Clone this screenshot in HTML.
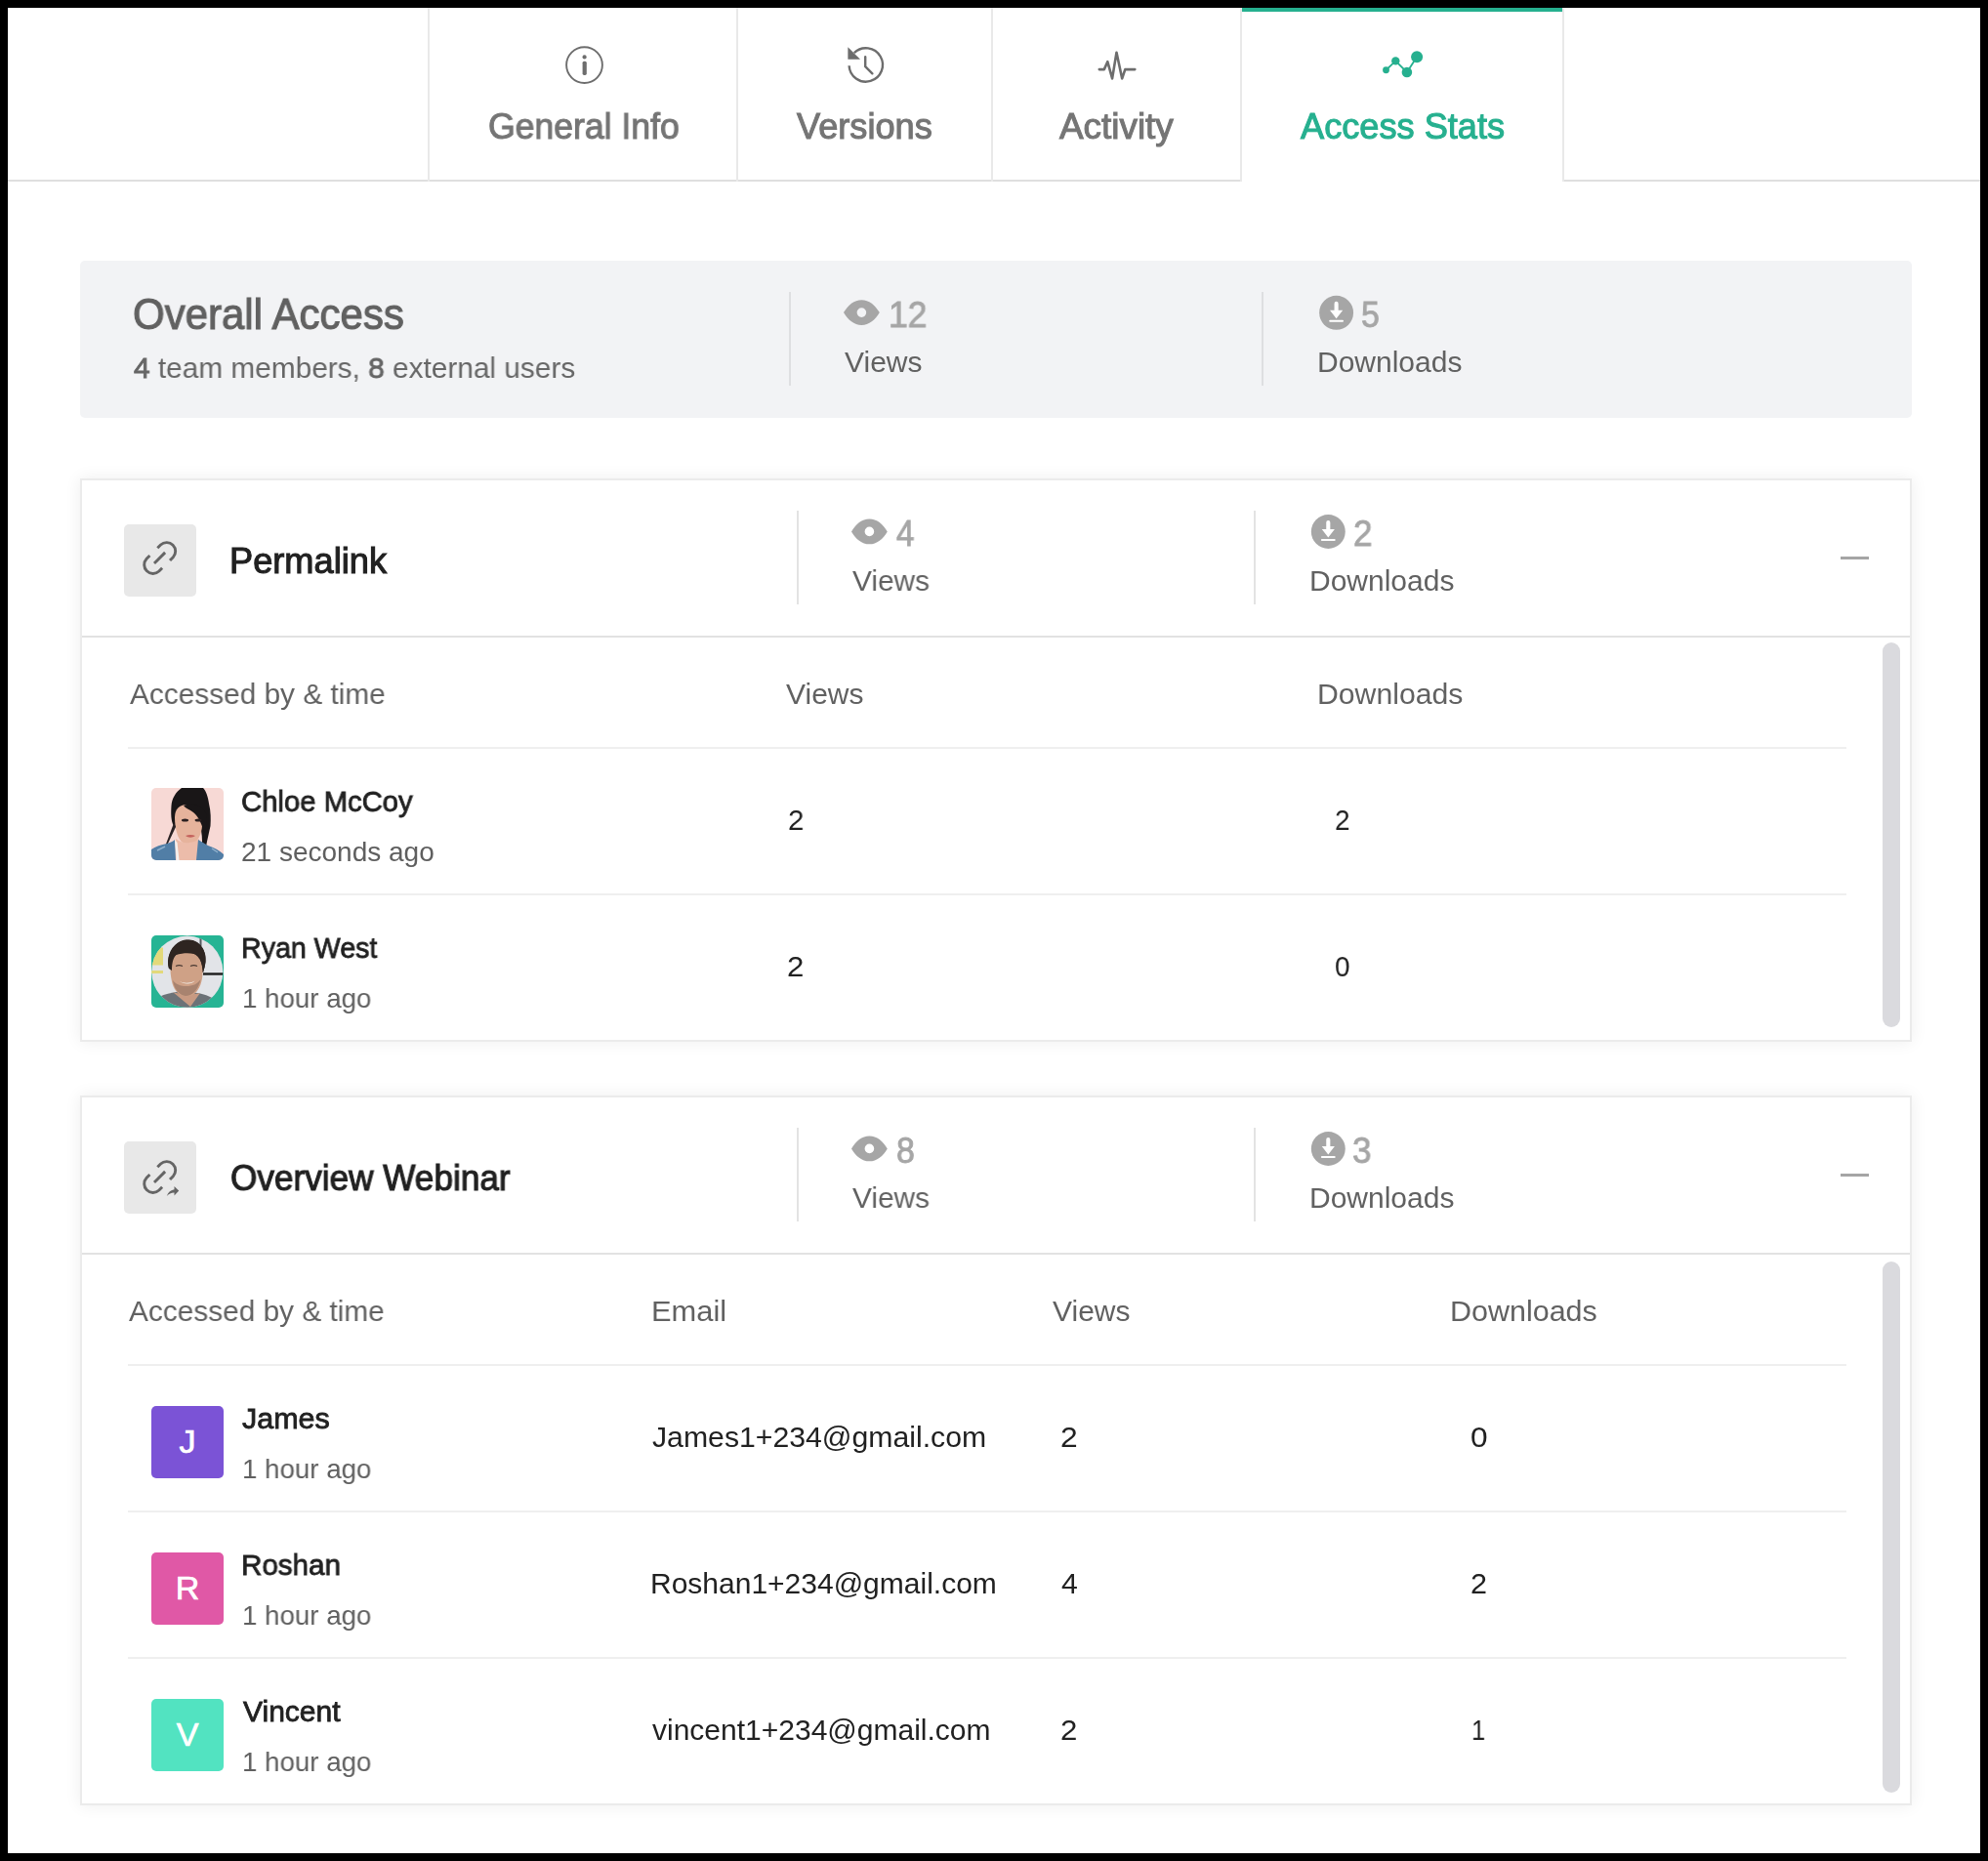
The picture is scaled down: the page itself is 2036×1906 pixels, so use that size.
<!DOCTYPE html>
<html><head><meta charset="utf-8"><title>Access Stats</title>
<style>

*{margin:0;padding:0;box-sizing:border-box}
html,body{width:2036px;height:1906px;overflow:hidden;background:#000}
body{position:relative;font-family:'Liberation Sans', sans-serif}
.t{position:absolute;white-space:nowrap;line-height:1;transform-origin:0 0;will-change:transform}
.t b.m{font-weight:400;-webkit-text-stroke:0.9px #666}

.a{position:absolute}
#page{position:absolute;left:8px;top:8px;width:2020px;height:1890px;background:#fff;overflow:hidden}
.vl{position:absolute;width:2px;background:#e9e9e9}
.hl{position:absolute;height:2px;background:#dfdfdf}
.card{position:absolute;left:82px;width:1876px;background:#fff;border:2px solid #ebebeb;box-shadow:0 0 16px rgba(0,0,0,0.07)}
.box{position:absolute;left:127px;width:74px;height:74px;border-radius:5px;background:#e8e8e8}
.minus{position:absolute;left:1885px;width:29px;height:3px;background:#a5a5a5}
.sep{position:absolute;left:131px;width:1760px;height:2px;background:#efefef}
.thumb{position:absolute;left:1928px;width:18px;border-radius:9px;background:#dadade}
.hdiv{position:absolute;width:2px;background:#e3e3e3}
.av{position:absolute;left:155px;width:74px;height:74px;border-radius:5px;overflow:hidden}
.lt{position:absolute;left:0;top:-1px;width:74px;height:74px;line-height:74px;text-align:center;color:#fff;font-size:34px;-webkit-text-stroke:0.7px #fff}
svg{position:absolute;left:0;top:0}
</style></head>
<body>
<div id="page"></div>

<!-- tabs -->
<div class="hl" style="left:8px;top:184px;width:1262px"></div>
<div class="hl" style="left:1602px;top:184px;width:426px"></div>
<div class="vl" style="left:438px;top:8px;height:178px"></div>
<div class="vl" style="left:754px;top:8px;height:178px"></div>
<div class="vl" style="left:1015px;top:8px;height:178px"></div>
<div class="vl" style="left:1270px;top:8px;height:178px"></div>
<div class="vl" style="left:1600px;top:8px;height:178px"></div>
<div class="a" style="left:1272px;top:8px;width:328px;height:4px;background:#26b08f"></div>

<!-- overall panel -->
<div class="a" style="left:82px;top:267px;width:1876px;height:161px;border-radius:5px;background:#f2f3f5"></div>
<div class="hdiv" style="left:808px;top:299px;height:96px;background:#dedfe1"></div>
<div class="hdiv" style="left:1292px;top:299px;height:96px;background:#dedfe1"></div>

<!-- card 1 -->
<div class="card" style="top:490px;height:577px"></div>
<div class="a" style="left:84px;top:651px;width:1872px;height:2px;background:#e2e2e2"></div>
<div class="box" style="top:537px"></div>
<div class="hdiv" style="left:816px;top:523px;height:96px"></div>
<div class="hdiv" style="left:1284px;top:523px;height:96px"></div>
<div class="minus" style="top:570px"></div>
<div class="sep" style="top:765px"></div>
<div class="sep" style="top:915px"></div>
<div class="thumb" style="top:658px;height:394px"></div>

<!-- card 2 -->
<div class="card" style="top:1122px;height:727px"></div>
<div class="a" style="left:84px;top:1283px;width:1872px;height:2px;background:#e2e2e2"></div>
<div class="box" style="top:1169px"></div>
<div class="hdiv" style="left:816px;top:1155px;height:96px"></div>
<div class="hdiv" style="left:1284px;top:1155px;height:96px"></div>
<div class="minus" style="top:1202px"></div>
<div class="sep" style="top:1397px"></div>
<div class="sep" style="top:1547px"></div>
<div class="sep" style="top:1697px"></div>
<div class="thumb" style="top:1292px;height:544px"></div>

<!-- letter avatars -->
<div class="av" style="top:1440px;background:#7b53d6"><div class="lt">J</div></div>
<div class="av" style="top:1590px;background:#e058a6"><div class="lt">R</div></div>
<div class="av" style="top:1740px;background:#52e3c1"><div class="lt">V</div></div>

<svg width="2036" height="1906" viewBox="0 0 2036 1906">
  <defs>
    <path id="eye" fill-rule="evenodd" d="M-18.4 0C-14 -7.6 -7.6 -12.9 0 -12.9C7.6 -12.9 14 -7.6 18.4 0C14 7.6 7.6 12.9 0 12.9C-7.6 12.9 -14 7.6 -18.4 0ZM-4.8 0A4.8 4.8 0 1 0 4.8 0A4.8 4.8 0 1 0 -4.8 0Z"/>
    <g id="dl">
      <circle r="17.45" fill="#a6a6a6"/>
      <path fill="#fff" d="M-2.05 -2.5L-2.05 -9.4A2.05 2.05 0 0 1 2.05 -9.4L2.05 -2.5L6.6 -2.5L0 5.9L-6.6 -2.5Z"/>
      <rect x="-7.4" y="7.4" width="14.8" height="2.1" rx="1" fill="#fff"/>
    </g>
    <g id="chain" fill="none" stroke="#656565" stroke-width="2.9">
      <path d="M34.29 24.29L37.54 21.04A9 9 0 0 1 50.26 33.76L47.01 37.01"/>
      <path d="M26.39 32.09L23.14 35.34A9 9 0 0 0 35.86 48.06L39.11 44.81"/>
      <path d="M31 40L42.1 28.9"/>
    </g>
  </defs>

  <!-- tab icons -->
  <g fill="none" stroke="#6d6d6d" stroke-width="1.9">
    <circle cx="598.5" cy="66.6" r="18.4"/>
  </g>
  <circle cx="598.6" cy="58.4" r="2.1" fill="#6d6d6d"/>
  <rect x="596.6" y="62.7" width="4.2" height="14.2" rx="1.6" fill="#6d6d6d"/>

  <g fill="none" stroke="#6d6d6d" stroke-width="2.4" stroke-linecap="round" stroke-linejoin="round">
    <path d="M869.6 67.2A17.2 17.2 0 1 0 874.8 54.1" stroke-linecap="butt"/>
    <path d="M886.2 58.3L886.2 68.2L893.4 75.3"/>
  </g>
  <path d="M868.4 48.2L868.4 60.8L881 60.8Z" fill="#6d6d6d"/>

  <polyline points="1125.8,71.1 1130.8,71.1 1134.3,63.2 1139.1,80.4 1143.5,53.8 1149.2,80.4 1152.3,71.1 1162.3,71.1" fill="none" stroke="#6d6d6d" stroke-width="2.6" stroke-linecap="round" stroke-linejoin="round"/>

  <g fill="#26b08f">
    <polyline points="1419.5,71.75 1429.3,62.4 1440.9,74 1451.1,58.2" fill="none" stroke="#26b08f" stroke-width="1.8"/>
    <circle cx="1419.5" cy="71.75" r="3.4"/>
    <circle cx="1429.3" cy="62.4" r="4.2"/>
    <circle cx="1440.9" cy="74" r="5.3"/>
    <circle cx="1451.1" cy="58.2" r="6"/>
  </g>

  <!-- overall stats icons -->
  <use href="#eye" x="882.4" y="320.1" fill="#a6a6a6"/>
  <use href="#dl" x="1368.6" y="320.3"/>

  <!-- card 1 -->
  <use href="#eye" x="890.4" y="544.4" fill="#a6a6a6"/>
  <use href="#dl" x="1360.3" y="544.5"/>
  <use href="#chain" x="127" y="537"/>

  <!-- card 2 -->
  <use href="#eye" x="890.4" y="1176.4" fill="#a6a6a6"/>
  <use href="#dl" x="1360.3" y="1176.5"/>
  <use href="#chain" x="127" y="1171"/>
  <path transform="translate(127 1169)" fill="#656565" d="M43.8 56C45.2 51.8 48 49.6 51.5 49.2L51.5 46L56.2 50.6L51.5 55.4L51.5 52.4C48.4 52.3 46 53.6 43.8 56Z"/>

  <!-- Chloe avatar -->
  <g transform="translate(155 807)">
    <clipPath id="c1"><rect width="74" height="74" rx="5"/></clipPath>
    <g clip-path="url(#c1)">
      <rect width="74" height="74" fill="#f7d9d5"/>
      <path d="M31 0L53 0C56 3 58 9 59 16C61 24 61 32 60.5 39C59 46 57.5 52 56 60L52 60C52 52 52 46 50 40L30 40C27 40 24 41 23 39C20 34 20 26 20.5 18C21 11 25 4 31 0Z" fill="#191617"/>
      <path d="M24 30C24 22 29 17 36 17C44 17 50 22 52 30C53 40 51 50 45 56C41 59 36 59 32 56C27 52 24 42 24 30Z" fill="#e6b39c"/>
      <path d="M33 18C42 14 52 18 56 26C58 32 57 40 54 46C52 38 49 30 43 25C39 22 35 21 33 18Z" fill="#191617"/>
      <path d="M23 36L14 60L15.5 60L25 40Z" fill="#2a2224"/>
      <ellipse cx="34.5" cy="33" rx="3.6" ry="1.6" fill="#2b2021"/>
      <ellipse cx="48" cy="33" rx="3.4" ry="1.5" fill="#2b2021"/>
      <path d="M35 49C38 47.8 42 47.8 45 49C42 51.2 38 51.2 35 49Z" fill="#c4625c"/>
      <path d="M25 52L26 74L48 74L49 52C44 57 32 58 25 52Z" fill="#ecbcaa"/>
      <path d="M0 74L0 63C4 60 10 58 16 57C20 56 23 54 24 53L25 74Z" fill="#517ea6"/>
      <path d="M74 74L74 68C70 64 64 61 58 59L48 53L46 74Z" fill="#517ea6"/>
      <path d="M24 53L26 74L28.5 74L26.5 56Z" fill="#f4f2f0"/>
      <path d="M6 64L14 60M62 62L68 66" stroke="#8fb0cc" stroke-width="1.5"/>
    </g>
  </g>

  <!-- Ryan avatar -->
  <g transform="translate(155 958)">
    <clipPath id="c2"><rect width="74" height="74" rx="5"/></clipPath>
    <g clip-path="url(#c2)">
      <rect width="74" height="74" fill="#26b494"/>
      <clipPath id="c3"><circle cx="36.8" cy="37.2" r="36.6"/></clipPath>
      <g clip-path="url(#c3)">
        <rect width="74" height="74" fill="#e2e4e8"/>
        <rect x="49.5" y="0" width="2" height="11" fill="#555a60"/>
        <rect x="0" y="12.5" width="12" height="18" fill="#e3d97a"/>
        <rect x="0" y="36" width="12" height="3" fill="#e3d97a"/>
        <rect x="53" y="38.3" width="22" height="2.4" fill="#1c1c1c"/>
        <path d="M6 74L8 63C14 60 20 59 26 58L48 59C56 61 62 63 66 67L68 74Z" fill="#6c7277"/>
        <path d="M22 58L40 73L50 59C44 61 30 61 22 58Z" fill="#c89a82"/>
        <path d="M18 34C15 22 22 5 36 4.5C50 4.5 57 16 55.5 27C55 31 54 35 53 38Z" fill="#2e2521"/>
        <path d="M19.5 36C19 26 24 17 35 16.5C46 16.5 52 25 52.5 35C53 45 50 55 44 60C40 63 32 63 27 59C22 54 20 46 19.5 36Z" fill="#cfa186"/>
        <path d="M22 46C23 54 28 61 35 62C42 62 48 56 50.5 45C47 50 42 52 36 52C30 52 25 50 22 46Z" fill="#a8836f"/>
        <path d="M18 34C15 24 19 13 27 8C33 4 41 3 47 7C53 11 56 19 55.5 27C55 31 54 35 53 38C52 31 51 25 48.5 21C44 18 35 17 25 20C22 24 21 29 21 36Z" fill="#2e2521"/>
        <path d="M28.5 46.5C32 49.5 40 49.5 44.5 46.5C42 50.5 32 50.5 28.5 46.5Z" fill="#f5f3ef"/>
        <path d="M25 31.5C27 30.5 30 30.5 32 31.5M40 31.5C42 30.5 45 30.5 47 31.5" stroke="#4a3a33" stroke-width="1.2" fill="none"/>
      </g>
    </g>
  </g>
</svg>

<div class="t" style="left:499.51px;top:112px;font-size:36px;color:#757575;-webkit-text-stroke:1.05px #757575;transform:scaleX(0.9883);">General Info</div>
<div class="t" style="left:816.41px;top:112px;font-size:36px;color:#757575;-webkit-text-stroke:1.05px #757575;transform:scaleX(1.0050);">Versions</div>
<div class="t" style="left:1085.32px;top:112px;font-size:36px;color:#757575;-webkit-text-stroke:1.05px #757575;transform:scaleX(1.0241);">Activity</div>
<div class="t" style="left:1332.30px;top:112px;font-size:36px;color:#26b08f;-webkit-text-stroke:1.05px #26b08f;transform:scaleX(1.0048);">Access Stats</div>
<div class="t" style="left:136.15px;top:300px;font-size:44px;color:#616161;-webkit-text-stroke:1.1px #616161;transform:scaleX(0.9547);">Overall Access</div>
<div class="t" style="left:137.00px;top:362px;font-size:30px;color:#666666;transform:scaleX(0.9934);"><b class="m">4</b> team members, <b class="m">8</b> external users</div>
<div class="t" style="left:910.03px;top:305px;font-size:36px;color:#a6a6a6;-webkit-text-stroke:0.9px #a6a6a6;transform:scaleX(0.9838);">12</div>
<div class="t" style="left:865.00px;top:356px;font-size:30px;color:#616161;">Views</div>
<div class="t" style="left:1394.36px;top:305px;font-size:36px;color:#a6a6a6;-webkit-text-stroke:0.9px #a6a6a6;transform:scaleX(0.9389);">5</div>
<div class="t" style="left:1349.21px;top:356px;font-size:30px;color:#616161;">Downloads</div>
<div class="t" style="left:234.99px;top:557px;font-size:36px;color:#212121;-webkit-text-stroke:1.05px #212121;transform:scaleX(1.0063);">Permalink</div>
<div class="t" style="left:918.20px;top:529px;font-size:36px;color:#a6a6a6;-webkit-text-stroke:0.9px #a6a6a6;transform:scaleX(0.9200);">4</div>
<div class="t" style="left:873.20px;top:580px;font-size:30px;color:#616161;transform:scaleX(0.9937);">Views</div>
<div class="t" style="left:1385.53px;top:529px;font-size:36px;color:#a6a6a6;-webkit-text-stroke:0.9px #a6a6a6;transform:scaleX(0.9722);">2</div>
<div class="t" style="left:1341.01px;top:580px;font-size:30px;color:#616161;">Downloads</div>
<div class="t" style="left:236.02px;top:1189px;font-size:36px;color:#212121;-webkit-text-stroke:1.05px #212121;transform:scaleX(0.9765);">Overview Webinar</div>
<div class="t" style="left:917.66px;top:1161px;font-size:36px;color:#a6a6a6;-webkit-text-stroke:0.9px #a6a6a6;transform:scaleX(0.9389);">8</div>
<div class="t" style="left:873.20px;top:1212px;font-size:30px;color:#616161;transform:scaleX(0.9937);">Views</div>
<div class="t" style="left:1385.23px;top:1161px;font-size:36px;color:#a6a6a6;-webkit-text-stroke:0.9px #a6a6a6;transform:scaleX(0.9722);">3</div>
<div class="t" style="left:1341.01px;top:1212px;font-size:30px;color:#616161;">Downloads</div>
<div class="t" style="left:132.80px;top:696px;font-size:30px;color:#616161;transform:scaleX(0.9935);">Accessed by &amp; time</div>
<div class="t" style="left:805.30px;top:696px;font-size:30px;color:#616161;">Views</div>
<div class="t" style="left:1349.49px;top:696px;font-size:30px;color:#616161;transform:scaleX(1.0068);">Downloads</div>
<div class="t" style="left:247.22px;top:806px;font-size:30px;color:#212121;-webkit-text-stroke:0.8px #212121;transform:scaleX(0.9756);">Chloe McCoy</div>
<div class="t" style="left:247.30px;top:859px;font-size:28px;color:#5f5f5f;">21 seconds ago</div>
<div class="t" style="left:807.22px;top:825px;font-size:30px;color:#212121;transform:scaleX(0.9800);">2</div>
<div class="t" style="left:1367.07px;top:825px;font-size:30px;color:#212121;transform:scaleX(0.9333);">2</div>
<div class="t" style="left:246.79px;top:956px;font-size:30px;color:#212121;-webkit-text-stroke:0.8px #212121;transform:scaleX(0.9538);">Ryan West</div>
<div class="t" style="left:247.52px;top:1009px;font-size:28px;color:#5f5f5f;transform:scaleX(0.9885);">1 hour ago</div>
<div class="t" style="left:806.36px;top:975px;font-size:30px;color:#212121;transform:scaleX(1.0400);">2</div>
<div class="t" style="left:1367.07px;top:975px;font-size:30px;color:#212121;transform:scaleX(0.9333);">0</div>
<div class="t" style="left:132.40px;top:1328px;font-size:30px;color:#616161;transform:scaleX(0.9935);">Accessed by &amp; time</div>
<div class="t" style="left:666.94px;top:1328px;font-size:30px;color:#616161;transform:scaleX(1.0282);">Email</div>
<div class="t" style="left:1078.20px;top:1328px;font-size:30px;color:#616161;">Views</div>
<div class="t" style="left:1484.67px;top:1328px;font-size:30px;color:#616161;transform:scaleX(1.0158);">Downloads</div>
<div class="t" style="left:247.80px;top:1438px;font-size:30px;color:#212121;-webkit-text-stroke:0.8px #212121;transform:scaleX(1.0159);">James</div>
<div class="t" style="left:247.52px;top:1491px;font-size:28px;color:#5f5f5f;transform:scaleX(0.9885);">1 hour ago</div>
<div class="t" style="left:668.10px;top:1457px;font-size:30px;color:#212121;transform:scaleX(1.0071);">James1+234@gmail.com</div>
<div class="t" style="left:1085.74px;top:1457px;font-size:30px;color:#212121;transform:scaleX(1.0600);">2</div>
<div class="t" style="left:1505.95px;top:1457px;font-size:30px;color:#212121;transform:scaleX(1.0533);">0</div>
<div class="t" style="left:246.73px;top:1588px;font-size:30px;color:#212121;-webkit-text-stroke:0.8px #212121;transform:scaleX(0.9860);">Roshan</div>
<div class="t" style="left:247.52px;top:1641px;font-size:28px;color:#5f5f5f;transform:scaleX(0.9885);">1 hour ago</div>
<div class="t" style="left:666.10px;top:1607px;font-size:30px;color:#212121;">Roshan1+234@gmail.com</div>
<div class="t" style="left:1087.00px;top:1607px;font-size:30px;color:#212121;transform:scaleX(1.0062);">4</div>
<div class="t" style="left:1506.38px;top:1607px;font-size:30px;color:#212121;transform:scaleX(1.0200);">2</div>
<div class="t" style="left:248.70px;top:1738px;font-size:30px;color:#212121;-webkit-text-stroke:0.8px #212121;">Vincent</div>
<div class="t" style="left:247.52px;top:1791px;font-size:28px;color:#5f5f5f;transform:scaleX(0.9885);">1 hour ago</div>
<div class="t" style="left:668.10px;top:1757px;font-size:30px;color:#212121;">vincent1+234@gmail.com</div>
<div class="t" style="left:1085.96px;top:1757px;font-size:30px;color:#212121;transform:scaleX(1.0400);">2</div>
<div class="t" style="left:1506.80px;top:1757px;font-size:30px;color:#212121;transform:scaleX(0.8500);">1</div>

</body></html>
